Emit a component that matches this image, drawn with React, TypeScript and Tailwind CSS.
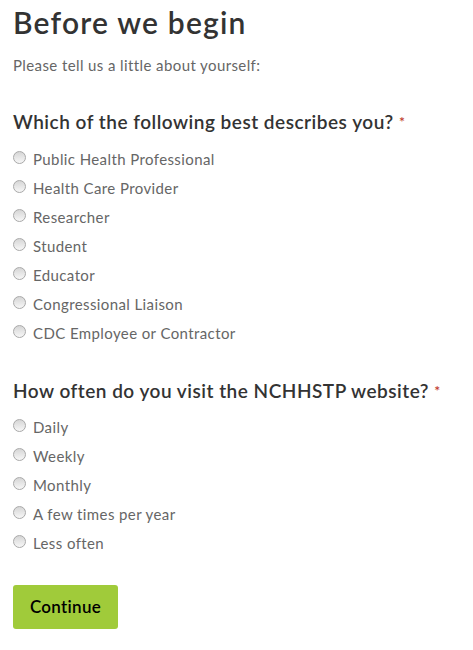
import React, { useState } from 'react'

const roles = [
  'Public Health Professional',
  'Health Care Provider',
  'Researcher',
  'Student',
  'Educator',
  'Congressional Liaison',
  'CDC Employee or Contractor',
]

const visits = ['Daily', 'Weekly', 'Monthly', 'A few times per year', 'Less often']

function Radio({ label, checked, onClick }: { label: string; checked: boolean; onClick: () => void }) {
  return (
    <label onClick={onClick} className="flex items-center h-[29px] cursor-pointer">
      <span className="w-[13px] h-[13px] -mt-[4px] rounded-full border border-[#a9a9a9] bg-gradient-to-b from-[#d6d6d6] to-[#f7f7f7] flex items-center justify-center shrink-0">
        {checked && <span className="w-[5px] h-[5px] rounded-full bg-[#333]" />}
      </span>
      <span className="ml-[7px] text-[15px] tracking-[0.4px] text-[#666]">{label}</span>
    </label>
  )
}

export default function App() {
  const [role, setRole] = useState<string | null>(null)
  const [visit, setVisit] = useState<string | null>(null)

  return (
    <div className="min-h-screen bg-white px-[13px] pt-[3px] font-['Lato','Open_Sans',sans-serif]">
      <h1 className="text-[30px] leading-[38px] font-semibold tracking-[1.2px] text-[#333]">Before we begin</h1>
      <p className="mt-[13px] text-[15px] tracking-[0.4px] text-[#666]">Please tell us a little about yourself:</p>

      {/* question 1 */}
      <h2 className="mt-[31px] text-[19px] font-semibold tracking-[0.5px] text-[#333]">
        Which of the following best describes you?{' '}
        <span className="relative -top-[2px] text-[#c0392b] text-[14px]">*</span>
      </h2>
      <div className="mt-[9px]">
        {roles.map((r) => (
          <Radio key={r} label={r} checked={role === r} onClick={() => setRole(r)} />
        ))}
      </div>

      {/* question 2 */}
      <h2 className="mt-[29px] text-[19px] font-semibold tracking-[0.5px] text-[#333]">
        How often do you visit the NCHHSTP website?{' '}
        <span className="relative -top-[2px] text-[#c0392b] text-[14px]">*</span>
      </h2>
      <div className="mt-[7px]">
        {visits.map((v) => (
          <Radio key={v} label={v} checked={visit === v} onClick={() => setVisit(v)} />
        ))}
      </div>

      <button className="mt-[27px] w-[105px] h-[44px] rounded-[3px] bg-[#a0cb3a] text-[17px] font-semibold tracking-[0.3px] text-black">
        Continue
      </button>
    </div>
  )
}
